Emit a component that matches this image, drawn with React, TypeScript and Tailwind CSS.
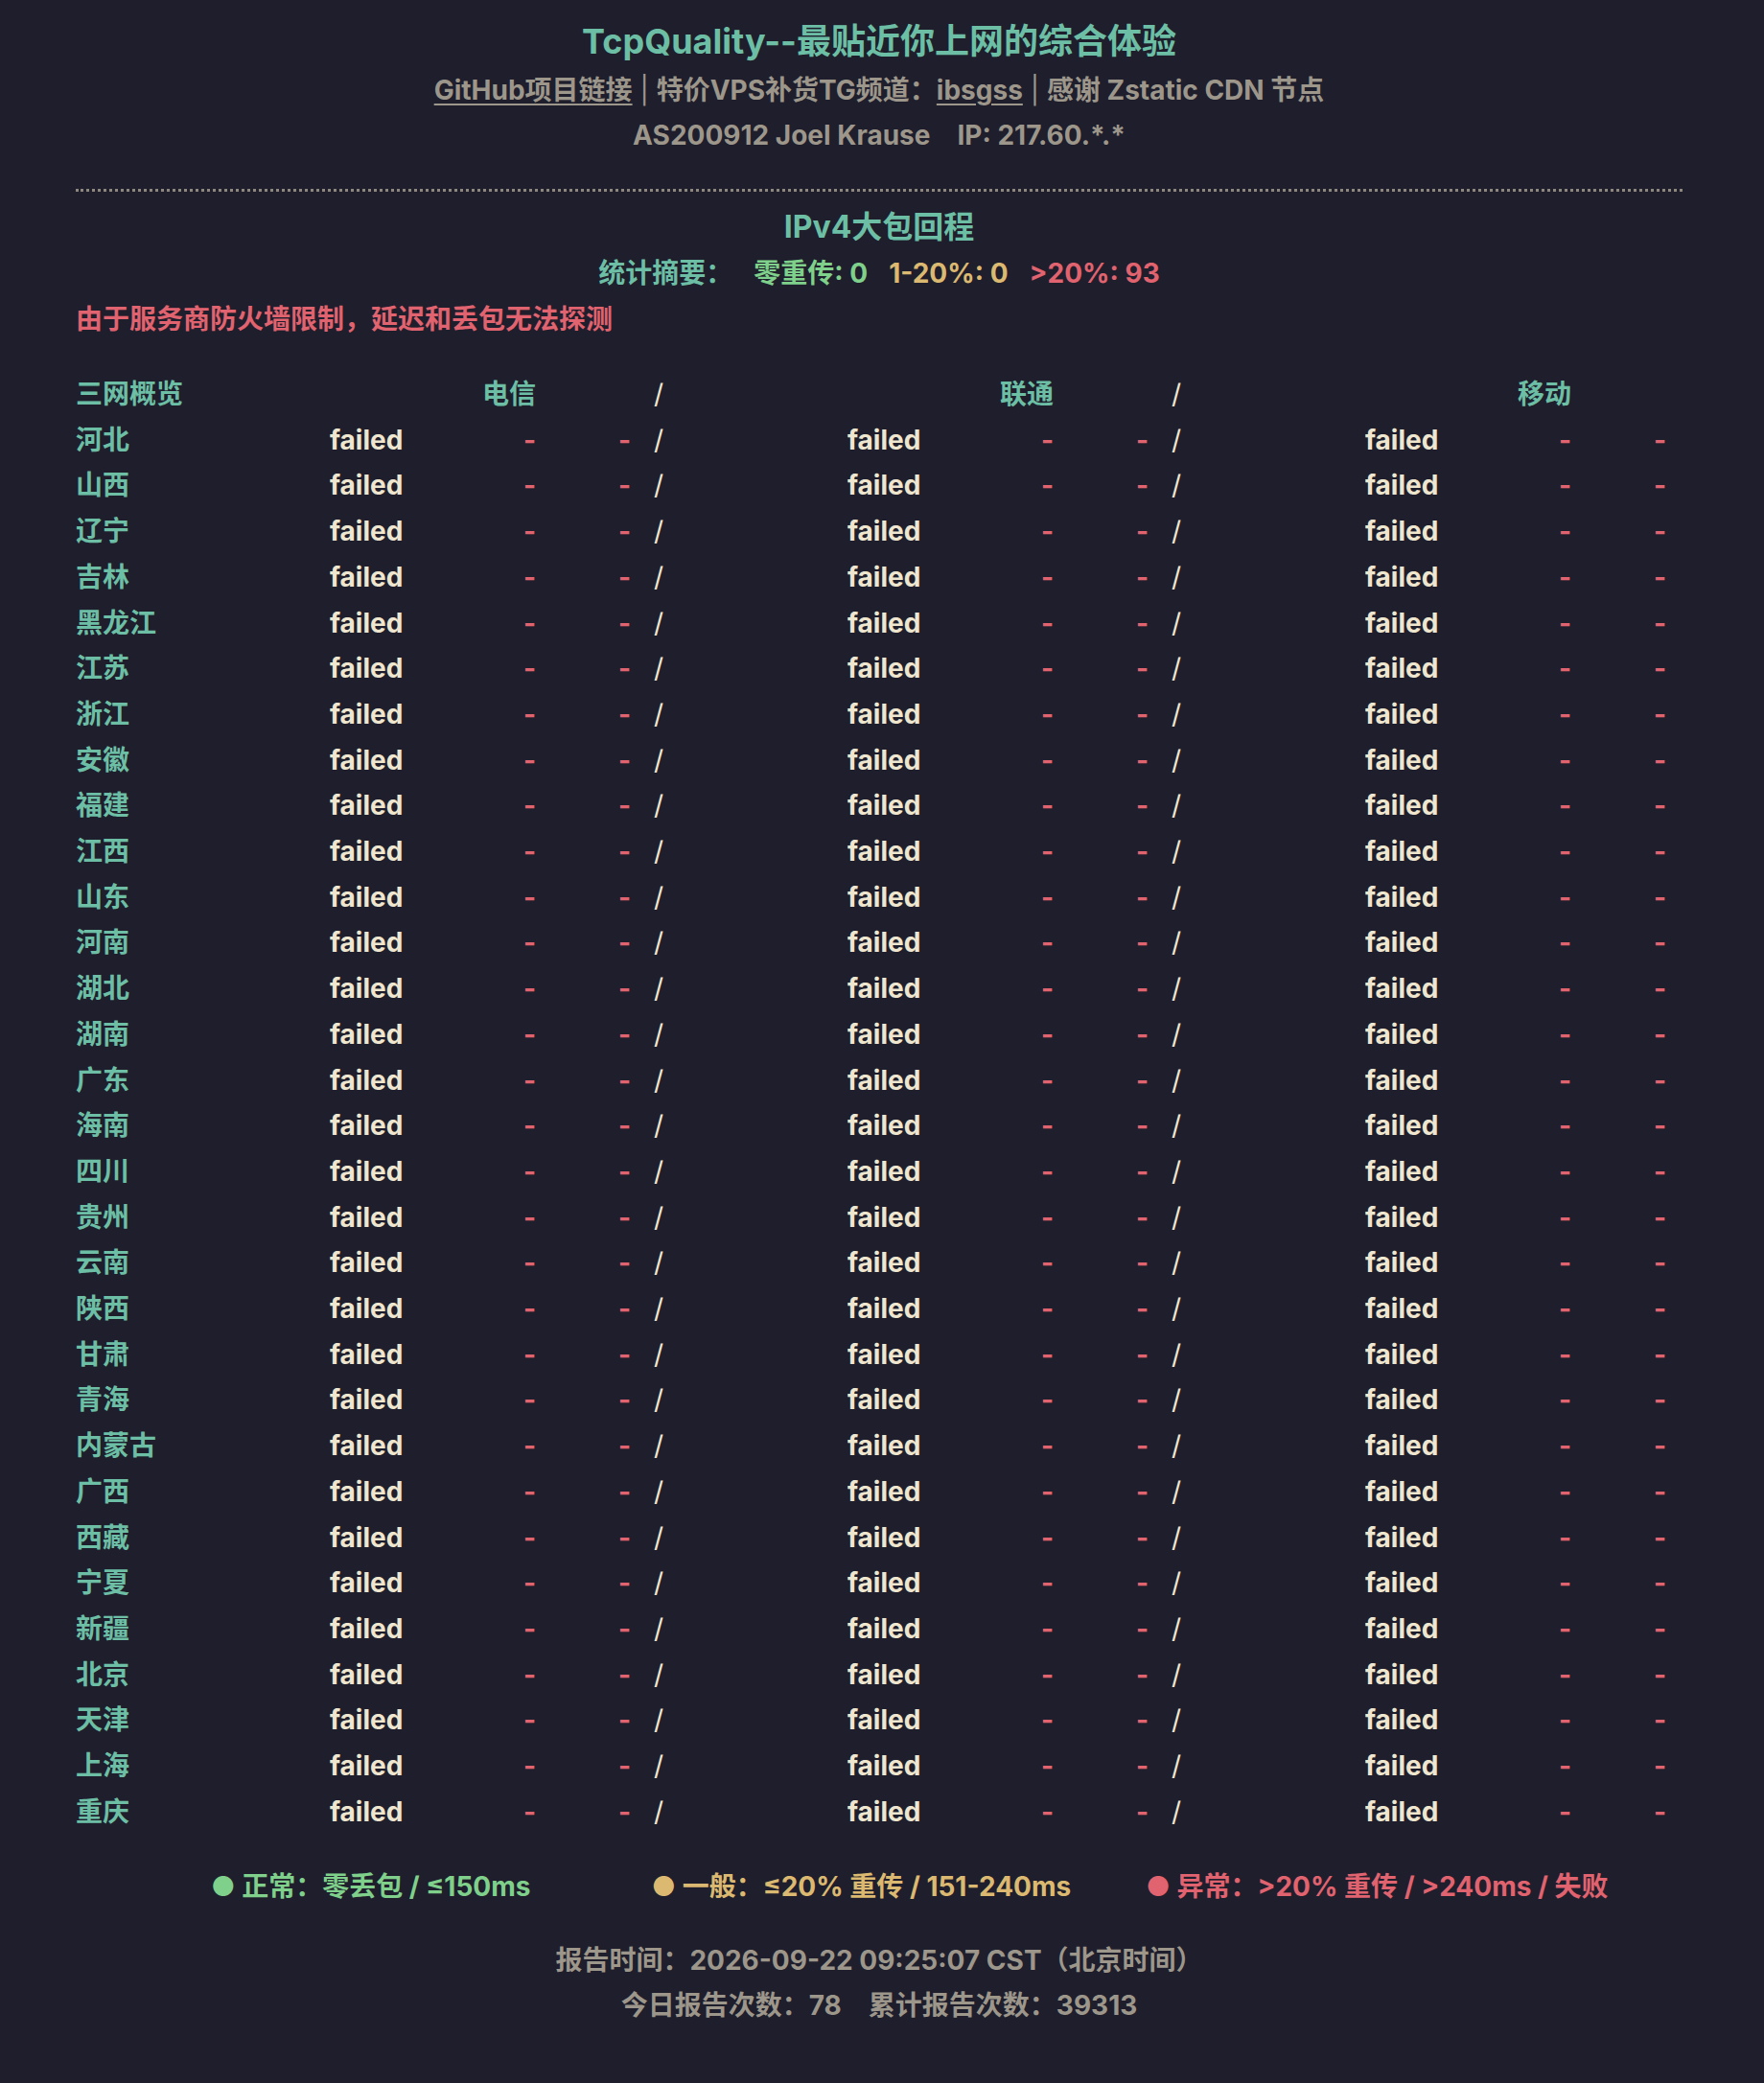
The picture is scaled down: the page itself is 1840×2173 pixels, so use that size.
const PROVINCES = [
  "河北", "山西", "辽宁", "吉林", "黑龙江", "江苏", "浙江", "安徽", "福建", "江西",
  "山东", "河南", "湖北", "湖南", "广东", "海南", "四川", "贵州", "云南", "陕西",
  "甘肃", "青海", "内蒙古", "广西", "西藏", "宁夏", "新疆", "北京", "天津", "上海", "重庆",
];

const CARRIERS = ["电信", "联通", "移动"];

const GRID =
  "grid grid-cols-[265px_140px_75px_99px_226px_140px_75px_99px_226px_140px_75px_99px] leading-[47.7px]";

function Slash() {
  return <span className="pl-[24px] font-normal text-[#efe6cf]">/</span>;
}

function Row({ name }: { name: string }) {
  return (
    <div className={GRID}>
      <span className="text-[#6cbea5]">{name}</span>
      {CARRIERS.map((c, i) => (
        <div key={c} className="contents">
          <span className="text-[#efe6cf]">failed</span>
          <span className="text-right text-[#e0636f]">-</span>
          <span className="text-right text-[#e0636f]">-</span>
          {i < 2 && <Slash />}
        </div>
      ))}
    </div>
  );
}

export default function App() {
  return (
    <div
      className="min-h-screen bg-[#1f1e2c] pt-[16px] pb-[57px] pl-[79px] pr-[85px] text-[28px] font-bold"
      style={{ fontFamily: "Inter, 'Noto Sans CJK SC', sans-serif" }}
    >
      {/* header */}
      <div className="text-center">
        <h1 className="text-[36px] leading-[55px] text-[#6cbea5]">TcpQuality--最贴近你上网的综合体验</h1>
        <div className="leading-[47px] text-[#9c968b]">
          <a href="#" className="underline underline-offset-4">GitHub项目链接</a>
          <span className="font-normal"> | </span>特价VPS补货TG频道：
          <a href="#" className="underline underline-offset-4">ibsgss</a>
          <span className="font-normal"> | </span>感谢 Zstatic CDN 节点
        </div>
        <div className="leading-[47px] text-[#9c968b]">
          AS200912 Joel Krause<span className="ml-[28px]">IP: 217.60.*.*</span>
        </div>
      </div>

      <div className="mt-[32px] border-t-[3px] border-dotted border-[#8d877e]" />

      {/* summary */}
      <div className="mt-[12px] text-center text-[32px] leading-[49px] text-[#6cbea5]">IPv4大包回程</div>
      <div className="flex justify-center gap-[22px] leading-[48px]">
        <span className="text-[#6cbea5]">统计摘要：</span>
        <span className="text-[#7fd08b]">零重传: 0</span>
        <span className="text-[#dcb970]">1-20%: 0</span>
        <span className="text-[#e0636f]">&gt;20%: 93</span>
      </div>
      <div className="leading-[48px] text-[#e0636f]">由于服务商防火墙限制，延迟和丢包无法探测</div>

      {/* table */}
      <div className="mt-[31px]">
        <div className={GRID}>
          <span className="text-[#6cbea5]">三网概览</span>
          {CARRIERS.map((c, i) => (
            <div key={c} className="contents">
              <span />
              <span className="text-right whitespace-nowrap text-[#6cbea5] [direction:rtl]">{c}</span>
              <span />
              {i < 2 && <Slash />}
            </div>
          ))}
        </div>
        {PROVINCES.map((p) => (
          <Row key={p} name={p} />
        ))}
      </div>

      {/* legend */}
      <div className="mt-[29px] flex pl-[141px] leading-[48px]">
        <span className="text-[#7fd08b]">● 正常：零丢包 / ≤150ms</span>
        <span className="ml-[126px] text-[#dcb970]">● 一般：≤20% 重传 / 151-240ms</span>
        <span className="ml-[78px] text-[#e0636f]">● 异常：&gt;20% 重传 / &gt;240ms / 失败</span>
      </div>

      {/* footer */}
      <div className="mt-[30px] text-center leading-[47px] text-[#9c968b]">
        <div>报告时间：2026-09-22 09:25:07 CST（北京时间）</div>
        <div>
          今日报告次数：78<span className="ml-[28px]">累计报告次数：39313</span>
        </div>
      </div>
    </div>
  );
}
